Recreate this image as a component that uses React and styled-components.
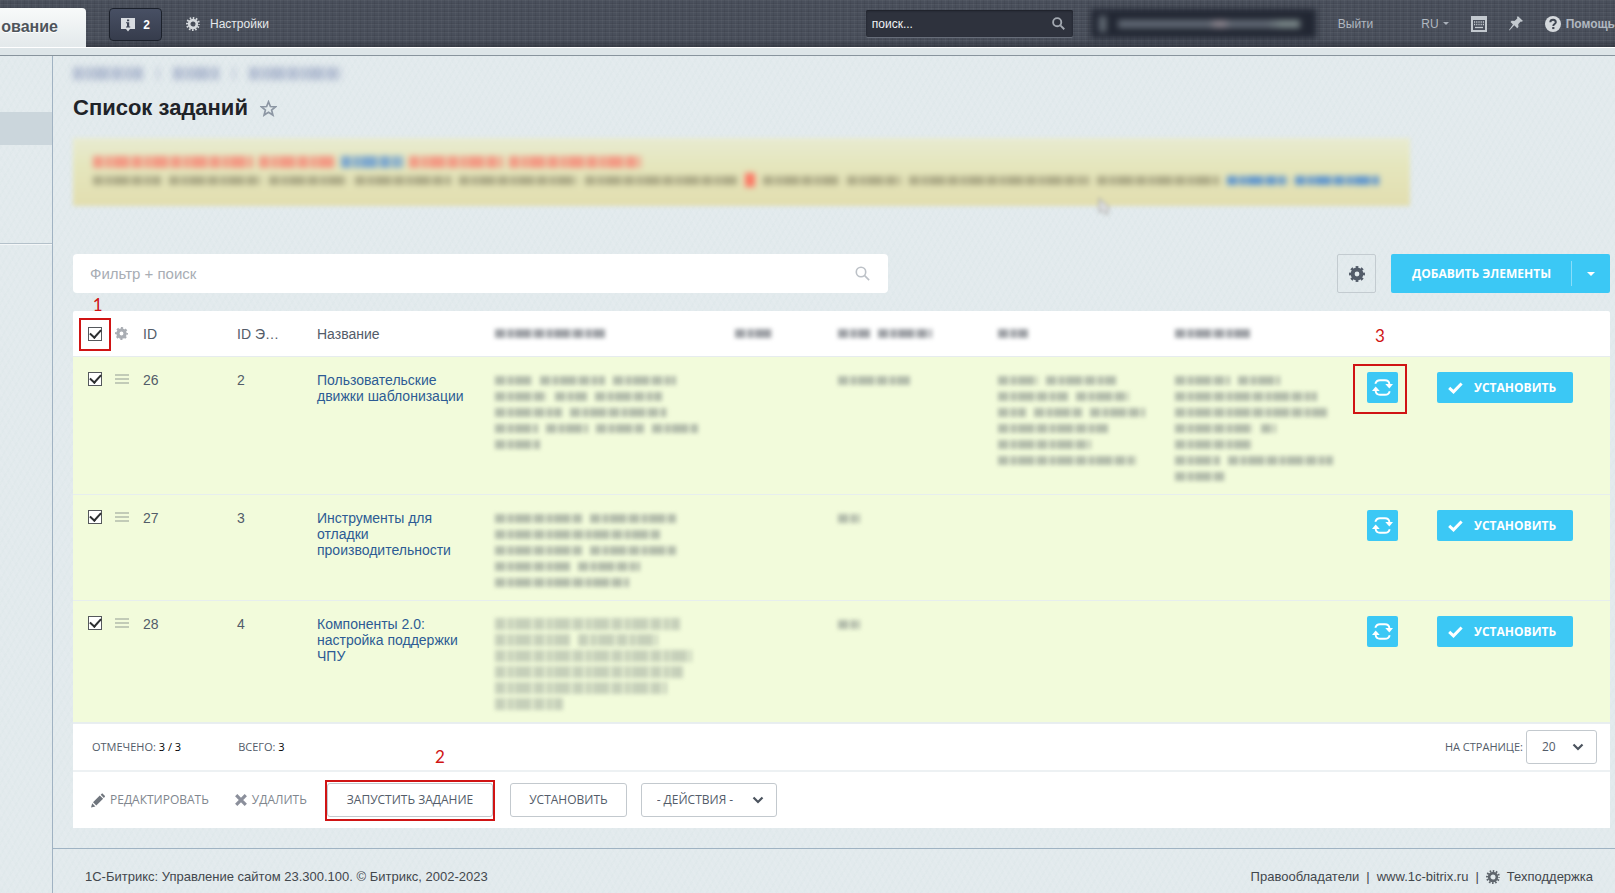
import React, { useState } from 'react'
import styled, { createGlobalStyle } from 'styled-components'

const GlobalStyle = createGlobalStyle`
  * { box-sizing: border-box; }
  body {
    margin: 0;
    background-color: #e2eaed;
    font-family: "Liberation Sans", Arial, sans-serif;
    font-size: 14px;
    color: #535c69;
  }
  button, input, select { font-family: inherit; margin: 0; }
`

const uiFont = '"Open Sans", "Noto Sans", sans-serif'

const Page = styled.div`
  display: flex;
  flex-direction: column;
  min-height: 100vh;
`

/* header */

const Header = styled.header`
  display: flex;
  align-items: flex-start;
  height: 47px;
  overflow: hidden;
  white-space: nowrap;
  font-size: 12px;
  background-color: #494f5b;
  background-image:
    linear-gradient(to bottom, transparent 40px, rgba(30, 34, 42, 0.45) 47px),
    repeating-linear-gradient(to right, rgba(255, 255, 255, 0.03) 0 1px, transparent 1px 3px, rgba(0, 0, 0, 0.06) 3px 4px, transparent 4px 7px),
    repeating-linear-gradient(to bottom, rgba(255, 255, 255, 0.04) 0 1px, transparent 1px 3px, rgba(0, 0, 0, 0.06) 3px 4px);
`

const Tab = styled.a`
  display: flex;
  justify-content: flex-end;
  width: 86px;
  height: 39px;
  margin-top: 8px;
  padding-right: 28px;
  border-radius: 0 4px 0 0;
  background: linear-gradient(to bottom, #f8fafa, #e3e9eb);
  color: #4e545b;
  font-size: 16px;
  font-weight: bold;
  line-height: 38px;
  text-decoration: none;
  text-shadow: 0 1px 0 #fff;
`

const InfoButton = styled.button`
  display: flex;
  align-items: center;
  justify-content: center;
  gap: 8px;
  width: 53px;
  height: 33px;
  margin: 8px 0 0 23px;
  padding: 0;
  border: 1px solid #1c212b;
  border-radius: 4px;
  background: linear-gradient(to bottom, #485064, #363c4c);
  color: #fff;
  font-size: 12px;
  font-weight: bold;
`

const HeaderLink = styled.a`
  display: flex;
  align-items: center;
  gap: ${props => props.$gap || 4}px;
  height: 47px;
  margin-left: ${props => props.$left || 0}px;
  color: ${props => props.$light ? '#e6e9ec' : '#b1b8c0'};
  font-weight: ${props => props.$bold ? 'bold' : 'normal'};
  text-decoration: none;
`

const Search = styled.label`
  display: flex;
  align-items: center;
  width: 207px;
  height: 27px;
  margin: 10px 0 0 auto;
  padding: 0 8px 0 6px;
  border-radius: 2px;
  background-color: #2e323d;
  box-shadow: inset 0 1px 2px #1c1f27, 0 1px 0 #676d79;
`

const SearchInput = styled.input`
  flex: 1;
  min-width: 0;
  padding: 0;
  border: 0;
  outline: 0;
  background: none;
  color: #fff;
  font-size: 12px;
  &::placeholder { color: #f1f2f4; opacity: 1; }
`

const UserBox = styled.div`
  display: flex;
  align-items: center;
  gap: 12px;
  width: 225px;
  height: 29px;
  margin: 9px 0 0 18px;
  padding-left: 8px;
  background-color: #222733;
  filter: blur(3px);
`

const UserBar = styled.span`
  width: ${props => props.$width}px;
  height: ${props => props.$height}px;
  background: linear-gradient(to right, #626a75 0 50%, #8b858e 54% 58%, #626a75 62% 82%, #7d8a8b 90%);
`

const Strip = styled.div`
  height: 9px;
  border-top: 1px solid #fff;
  border-bottom: 1px solid #88949d;
  background-color: #dde5e8;
`

/* page body */

const Body = styled.div`
  display: flex;
  flex: 1;
  background-image:
    repeating-linear-gradient(60deg, rgba(255, 255, 255, 0.07) 0 2px, transparent 2px 5px),
    repeating-linear-gradient(-60deg, rgba(170, 195, 190, 0.04) 0 2px, transparent 2px 6px);
`

const Sidebar = styled.nav`
  flex: none;
  width: 53px;
  padding-top: 56px;
  border-right: 1px solid #a0b2c2;
`

const SidebarItem = styled.div`
  height: 33px;
  background-color: #cbd6dc;
`

const SidebarLine = styled.div`
  height: 2px;
  margin-top: 98px;
  border-top: 1px solid #b4c1ca;
  border-bottom: 1px solid #f4f7f8;
`

const Column = styled.div`
  display: flex;
  flex: 1;
  flex-direction: column;
  min-width: 0;
`

const Main = styled.main`
  flex: 1;
  padding: 0 5px 20px 20px;
`

const Breadcrumbs = styled.div`
  display: flex;
  align-items: center;
  gap: 14px;
  height: 34px;
  filter: blur(3px);
`

const TitleRow = styled.div`
  display: flex;
  align-items: center;
  gap: 12px;
  height: 36px;
`

const Title = styled.h1`
  margin: 0;
  color: #1f2328;
  font-size: 22px;
  line-height: 36px;
`

const IconButton = styled.button`
  display: flex;
  padding: 0;
  border: 0;
  background: none;
`

const Banner = styled.section`
  position: relative;
  width: 87%;
  height: 68px;
  margin: 12px 0 48px;
  padding: 14px 20px;
  background: linear-gradient(to bottom, #e8ebd1, #e5e6bd 40%, #e2deb0);
  filter: blur(2px);
`

const Pointer = styled.svg`
  position: absolute;
  right: 296px;
  bottom: -11px;
`

/* text hidden behind a blur */

const RedactedLine = styled.div`
  display: flex;
  align-items: center;
  gap: ${props => props.$gap || 8}px;
  height: ${props => props.$tall ? 20 : 16}px;
  filter: blur(2px);
`

const RedactedWord = styled.span`
  flex: none;
  height: ${props => props.$height || 9}px;
  opacity: ${props => props.$opacity || 0.65};
  background-color: ${props => props.$color || '#77807f'};
  mask-image: repeating-linear-gradient(to right, #000 0 10px, rgba(0, 0, 0, 0.3) 10px 13px, #000 13px 18px, rgba(0, 0, 0, 0.4) 18px 20px, #000 20px 36px, rgba(0, 0, 0, 0.3) 36px 39px);
`

const Redacted = ({ lines, color, height, opacity }) => (
  <div aria-hidden="true">
    {lines.map((words, i) => (
      <RedactedLine key={i}>
        {words.map((width, j) => (
          <RedactedWord key={j} $color={color} $height={height} $opacity={opacity} style={{ width }} />
        ))}
      </RedactedLine>
    ))}
  </div>
)

/* toolbar */

const Toolbar = styled.div`
  display: flex;
  align-items: stretch;
  height: 39px;
  margin-bottom: 18px;
`

const Filter = styled.label`
  display: flex;
  align-items: center;
  width: 53%;
  margin-right: auto;
  padding: 0 18px 0 17px;
  border-radius: 4px;
  background-color: #fff;
`

const FilterInput = styled.input`
  flex: 1;
  padding: 0;
  border: 0;
  outline: 0;
  background: none;
  color: #333;
  font-size: 15px;
  &::placeholder { color: #a8adb4; opacity: 1; }
`

const SettingsButton = styled.button`
  display: flex;
  align-items: center;
  justify-content: center;
  width: 39px;
  margin-right: 15px;
  padding: 0;
  border: 1px solid #c3cbd0;
  border-radius: 2px;
  background: none;
`

const AddGroup = styled.div`
  display: flex;
  align-items: center;
  border-radius: 2px;
  background-color: #3bc8f5;
`

const AddButton = styled.button`
  height: 39px;
  padding: 0 20px 0 21px;
  border: 0;
  background: none;
  color: #fff;
  font: bold 12px/39px ${uiFont};
  text-transform: uppercase;
`

const AddMenuButton = styled.button`
  display: flex;
  align-items: center;
  justify-content: center;
  width: 39px;
  height: 25px;
  padding: 0;
  border: 0;
  border-left: 1px solid #89ddf9;
  background: none;
`

/* grid */

const Grid = styled.section`
  border-radius: 2px 2px 0 0;
  background-color: #fff;
`

const Table = styled.table`
  width: 100%;
  table-layout: fixed;
  border-collapse: separate;
  border-spacing: 0;
`

const Col = styled.col`
  width: ${props => props.$width ? `${props.$width}px` : 'auto'};
`

const Th = styled.th`
  height: 46px;
  padding: 0;
  border-bottom: 1px solid #e6ecee;
  font-weight: normal;
  line-height: 16px;
  text-align: left;
  white-space: nowrap;
`

const Td = styled.td`
  padding: 15px 20px 10px 0;
  border-bottom: 1px solid #e7eeee;
  background-color: #f2fbdb;
  line-height: 16px;
  vertical-align: top;
`

const Tools = styled.div`
  display: flex;
  align-items: center;
  gap: 13px;
  padding-left: 15px;
  > * { flex: none; }
`

const Checkbox = styled.input.attrs({ type: 'checkbox' })`
  appearance: none;
  display: flex;
  align-items: center;
  justify-content: center;
  width: 14px;
  height: 14px;
  border: 1px solid #55585c;
  background-color: #fff;
  &:checked::after {
    content: "";
    width: 5px;
    height: 9px;
    margin-top: -3px;
    border: solid #2d2f31;
    border-width: 0 2px 2px 0;
    transform: rotate(42deg);
  }
`

const NameLink = styled.a`
  color: #2d5b94;
  text-decoration: none;
`

const RefreshButton = styled.button`
  display: flex;
  align-items: center;
  justify-content: center;
  width: 31px;
  height: 31px;
  padding: 0;
  border: 0;
  border-radius: 2px;
  background-color: #3bc8f5;
`

const InstallButton = styled.button`
  display: flex;
  align-items: center;
  gap: 11px;
  width: 136px;
  height: 31px;
  padding: 0 0 0 11px;
  border: 0;
  border-radius: 2px;
  background-color: #3bc8f5;
  color: #fff;
  font: bold 12px/31px ${uiFont};
  text-transform: uppercase;
`

const Summary = styled.div`
  display: flex;
  align-items: center;
  gap: 57px;
  height: 47px;
  padding: 0 13px 0 19px;
  border-top: 1px solid #e9eef1;
  color: #535c69;
  font: 11px/16px ${uiFont};
  text-transform: uppercase;
`

const Count = styled.span`
  color: #000;
`

const PageSize = styled.label`
  display: flex;
  align-items: center;
  gap: 3px;
  margin-left: auto;
`

const Actions = styled.div`
  display: flex;
  align-items: center;
  height: 58px;
  padding: 0 18px;
  border-top: 2px solid #edf1f3;
`

const TextButton = styled.button`
  display: flex;
  align-items: center;
  gap: 5px;
  margin-right: ${props => props.$right}px;
  padding: 0;
  border: 0;
  background: none;
  color: #80868e;
  font: 12px/16px ${uiFont};
  text-transform: uppercase;
`

const OutlineButton = styled.button`
  height: 34px;
  padding: 0 ${props => props.$pad || 18}px;
  border: 1px solid #c3c9ce;
  border-radius: 3px;
  background-color: #fff;
  color: #535c69;
  font: 12px/32px ${uiFont};
  text-transform: uppercase;
`

const SelectBox = styled.span`
  display: grid;
  align-items: center;
  width: ${props => props.$width}px;
  margin-left: ${props => props.$left || 0}px;
  > * { grid-area: 1 / 1; }
  > svg { justify-self: end; margin-right: 13px; pointer-events: none; }
`

const Select = styled.select`
  appearance: none;
  width: 100%;
  height: 34px;
  padding: 0 30px 0 15px;
  border: 1px solid #c3c9ce;
  border-radius: 3px;
  background-color: #fff;
  color: #535c69;
  font: 12px/32px ${uiFont};
  text-transform: uppercase;
`

/* red callouts over the controls */

const Callout = styled.div`
  position: relative;
  display: inline-flex;
  margin-right: ${props => props.$right || 0}px;
`

const Frame = styled.span`
  position: absolute;
  inset: ${props => props.$inset};
  border: 2px solid #d01414;
  pointer-events: none;
`

const FrameNumber = styled.span`
  position: absolute;
  bottom: calc(100% + ${props => props.$gap}px);
  left: ${props => props.$left || '50%'};
  transform: translateX(-50%);
  color: #d01414;
  font: 17px/20px Lato, sans-serif;
`

/* footer */

const Footer = styled.footer`
  display: flex;
  align-items: center;
  padding: 20px 22px 8px 32px;
  border-top: 1px solid #9fb3c3;
  color: #42474c;
  font-size: 13px;
  line-height: 16px;
`

const FooterLinks = styled.div`
  display: flex;
  align-items: center;
  gap: 7px;
  margin-left: auto;
`

const FooterLink = styled.a`
  display: flex;
  align-items: center;
  gap: 7px;
  color: inherit;
  text-decoration: none;
`

/* icons */

const Gear = ({ size, color, teeth = 8, ring = 4 }) => (
  <svg width={size} height={size} viewBox="0 0 16 16" fill="none" stroke={color}>
    <circle cx="8" cy="8" r="4.4" strokeWidth={ring} />
    <circle cx="8" cy="8" r="6.8" strokeWidth="2.4" pathLength={teeth * 2} strokeDasharray="1 1" strokeDashoffset="0.5" />
  </svg>
)

const Magnifier = ({ size, color, width }) => (
  <svg width={size} height={size} viewBox="0 0 14 14" fill="none" stroke={color} strokeWidth={width}>
    <circle cx="5.6" cy="5.6" r="4.4" />
    <path d="M9 9l4.2 4.2" />
  </svg>
)

const Chevron = () => (
  <svg width="12" height="8" viewBox="0 0 12 8" fill="none" stroke="#4b535e" strokeWidth="2.2">
    <path d="M1.5 1.5L6 6l4.5-4.5" />
  </svg>
)

const Refresh = () => (
  <svg width="21" height="17" viewBox="0 0 21 17" fill="none" stroke="#fff" strokeWidth="1.9">
    <path d="M3.3 4.8C4 2.3 5.5 1.2 8 1.2h5c2.8 0 4.2 1.4 4.4 4" />
    <path d="M13.3 5H21l-3.7 4.5z" fill="#fff" stroke="none" />
    <path d="M17.7 12.2c-.7 2.5-2.2 3.6-4.7 3.6H8c-2.8 0-4.2-1.4-4.4-4" />
    <path d="M7.7 12H0l3.7-4.5z" fill="#fff" stroke="none" />
  </svg>
)

const Check = () => (
  <svg width="15" height="12" viewBox="0 0 15 12" fill="none" stroke="#fff" strokeWidth="3">
    <path d="M1.2 5.8l4.3 4L13.6 1.5" />
  </svg>
)

const Lines = () => (
  <svg width="14" height="10" viewBox="0 0 14 10" fill="#c2cbb7">
    <path d="M0 0h14v2H0zM0 4h14v2H0zM0 8h14v2H0z" />
  </svg>
)

const Info = () => (
  <svg width="14" height="15" viewBox="0 0 14 15">
    <path d="M0 1h14v11H9l-2 2.5L5 12H0z" fill="#d8dce1" />
    <path d="M6 2.5h2.2v1.8H6zM5 5.3h3.2v4.2h1v1H5v-1h1V6.3H5z" fill="#3d4455" />
  </svg>
)

const Keyboard = () => (
  <svg width="16" height="16" viewBox="0 0 16 16">
    <path d="M0 0h16v16H0z" fill="#c3c9cf" />
    <path d="M2 4h12v10H2z" fill="#4a505c" />
    <path d="M3 6h10M3 8.5h10" stroke="#c3c9cf" strokeWidth="1.3" strokeDasharray="1.2 1" />
    <path d="M4 11.5h8" stroke="#c3c9cf" strokeWidth="1.3" />
  </svg>
)

const Pin = () => (
  <svg width="14" height="15" viewBox="0 0 14 15" fill="#c3c9cf">
    <path d="M8.8 0L14 5l-1.500.8-.8-.3-2.5 2.8.3 2.7-1.3 1.2-2.9-2.9L.5 14.5 0 14l4-5.5L1.5 6l1.2-1.2 2.8.2 2.8-2.500-.3-1z" />
  </svg>
)

const Help = () => (
  <svg width="16" height="16" viewBox="0 0 16 16">
    <circle cx="8" cy="8" r="8" fill="#d5d9dd" />
    <path d="M5.3 6.2c.1-3.4 5.5-3.3 5.5 0 0 1.8-2.5 1.9-2.5 3.7" fill="none" stroke="#414753" strokeWidth="2" />
    <path d="M7.2 11h2.2v2.1H7.2z" fill="#414753" />
  </svg>
)

const Star = () => (
  <svg width="17" height="17" viewBox="0 0 17 17" fill="none" stroke="#8d97a4" strokeWidth="1.7">
    <path d="M8.500 1.800l1.900 4.700 5.100.3-3.900 3.200 1.300 5-4.400-2.800L4.100 15l1.300-5-3.900-3.200 5.100-.3z" />
  </svg>
)

const Pencil = () => (
  <svg width="14" height="15" viewBox="0 0 14 15" fill="#6f757d">
    <path d="M0 14.5l1.2-4.3 3.2 3.2zM2 9.2L8.800 2.500l3.300 3.300-6.800 6.700zM9.700 1.700L11.200.3l3 3L12.900 4.900z" />
  </svg>
)

const Cross = () => (
  <svg width="12" height="12" viewBox="0 0 12 12" stroke="#8b8f9b" strokeWidth="3.2">
    <path d="M1.2 1.2l9.6 9.6M10.8 1.2l-9.6 9.6" />
  </svg>
)

const Caret = ({ color, width }) => (
  <svg width={width} height={width / 2} viewBox="0 0 8 4" fill={color}>
    <path d="M0 0h8L4 4z" />
  </svg>
)

const columns = [70, 94, 80, 178, 240, 103, 160, 177, 192, 70, 0]

const hiddenHeads = [[[110]], [[37]], [[32, 54]], [[30]], [[75]]]

const rows = [
  {
    id: 26,
    itemId: 2,
    name: 'Пользовательские движки шаблонизации',
    about: [[37, 65, 63], [52, 32, 67], [67, 97], [43, 42, 48, 46], [45]],
    type: [[72]],
    plus: [[40, 70], [70, 53], [28, 48, 55], [110], [93], [138]],
    minus: [[55, 42], [142], [152], [78, 15], [77], [45, 105], [50]]
  },
  {
    id: 27,
    itemId: 3,
    name: 'Инструменты для отладки производительности',
    about: [[87, 86], [165], [87, 86], [75, 62], [134]],
    type: [[22]],
    plus: [],
    minus: []
  },
  {
    id: 28,
    itemId: 4,
    name: 'Компоненты 2.0: настройка поддержки ЧПУ',
    about: [[185], [75, 80], [197], [188], [172], [68]],
    type: [[22]],
    plus: [],
    minus: [],
    faded: true
  }
]

const TopBar = () => (
  <>
    <Header>
      <Tab href="#">ование</Tab>
      <InfoButton><Info />2</InfoButton>
      <HeaderLink href="#" $left={24} $gap={10} $light>
        <Gear size={14} color="#d5d9dd" teeth={12} ring={3} />
        Настройки
      </HeaderLink>
      <Search>
        <SearchInput placeholder="поиск..." aria-label="поиск" />
        <Magnifier size={13} color="#a3a9b1" width={2} />
      </Search>
      <UserBox aria-hidden="true">
        <UserBar $width={7} $height={16} />
        <UserBar $width={182} $height={8} />
      </UserBox>
      <HeaderLink href="#" $left={22}>Выйти</HeaderLink>
      <HeaderLink href="#" $left={48}>RU <Caret color="#a9b0b9" width={6} /></HeaderLink>
      <HeaderLink href="#" $left={22} aria-label="Клавиатура"><Keyboard /></HeaderLink>
      <HeaderLink href="#" $left={22} aria-label="Закрепить"><Pin /></HeaderLink>
      <HeaderLink href="#" $left={22} $gap={5} $bold><Help />Помощь</HeaderLink>
    </Header>
    <Strip />
  </>
)

const Notice = () => (
  <Banner aria-hidden="true">
    <RedactedLine $tall $gap={6}>
      <RedactedWord $color="#f77f70" $height={12} $opacity={0.75} style={{ width: 160 }} />
      <RedactedWord $color="#f77f70" $height={12} $opacity={0.75} style={{ width: 76 }} />
      <RedactedWord $color="#6f9fd0" $height={12} $opacity={0.9} style={{ width: 62 }} />
      <RedactedWord $color="#f77f70" $height={12} $opacity={0.75} style={{ width: 94 }} />
      <RedactedWord $color="#f77f70" $height={12} $opacity={0.75} style={{ width: 132 }} />
    </RedactedLine>
    <RedactedLine>
      {[68, 92, 78, 96, 118, 152].map((width, i) => (
        <RedactedWord key={i} $color="#8e8a6c" style={{ width }} />
      ))}
      <RedactedWord $color="#ff6b5a" $height={14} $opacity={0.9} style={{ width: 10 }} />
      {[76, 54, 180, 122].map((width, i) => (
        <RedactedWord key={i} $color="#8e8a6c" style={{ width }} />
      ))}
      <RedactedWord $color="#4f8cd0" $opacity={0.9} style={{ width: 60 }} />
      <RedactedWord $color="#4f8cd0" $opacity={0.9} style={{ width: 84 }} />
    </RedactedLine>
    <Pointer width="18" height="20" viewBox="0 0 18 20">
      <path d="M3 1l10 9-2 8-4-4-4 1z" fill="#dcdde0" stroke="#9a9a92" />
    </Pointer>
  </Banner>
)

const App = () => {
  const [checked, setChecked] = useState([26, 27, 28])
  const [pageSize, setPageSize] = useState('20')

  const toggle = id => setChecked(
    checked.includes(id) ? checked.filter(item => item !== id) : [...checked, id]
  )
  const toggleAll = () => setChecked(checked.length === rows.length ? [] : rows.map(row => row.id))

  return (
    <Page>
      <GlobalStyle />
      <TopBar />
      <Body>
        <Sidebar>
          <SidebarItem />
          <SidebarLine />
        </Sidebar>
        <Column>
          <Main>
            <Breadcrumbs aria-hidden="true">
              {[70, 2, 46, 2, 92].map((width, i) => (
                <RedactedWord key={i} $color="#97a3c2" $height={13} $opacity={0.6} style={{ width }} />
              ))}
            </Breadcrumbs>
            <TitleRow>
              <Title>Список заданий</Title>
              <IconButton aria-label="В избранное"><Star /></IconButton>
            </TitleRow>
            <Notice />
            <Toolbar>
              <Filter>
                <FilterInput placeholder="Фильтр + поиск" aria-label="Фильтр + поиск" />
                <Magnifier size={15} color="#bcc1c7" width={1.5} />
              </Filter>
              <SettingsButton aria-label="Настройки списка">
                <Gear size={16} color="#535c69" />
              </SettingsButton>
              <AddGroup>
                <AddButton>Добавить элементы</AddButton>
                <AddMenuButton aria-label="Ещё"><Caret color="#fff" width={8} /></AddMenuButton>
              </AddGroup>
            </Toolbar>
            <Grid>
              <Table>
                <colgroup>
                  {columns.map((width, i) => <Col key={i} $width={width} />)}
                </colgroup>
                <thead>
                  <tr>
                    <Th>
                      <Tools>
                        <Callout>
                          <Checkbox
                            aria-label="Выбрать все"
                            checked={checked.length === rows.length}
                            onChange={toggleAll}
                          />
                          <Frame $inset="-9px -9px -10px"><FrameNumber $gap={5} $left="60%">1</FrameNumber></Frame>
                        </Callout>
                        <Gear size={13} color="#a9adb3" />
                      </Tools>
                    </Th>
                    <Th>ID</Th>
                    <Th>ID Э…</Th>
                    <Th>Название</Th>
                    {hiddenHeads.map((lines, i) => (
                      <Th key={i}><Redacted lines={lines} color="#6c7078" /></Th>
                    ))}
                    <Th />
                    <Th />
                  </tr>
                </thead>
                <tbody>
                  {rows.map((row, i) => (
                    <tr key={row.id}>
                      <Td>
                        <Tools>
                          <Checkbox
                            aria-label={row.name}
                            checked={checked.includes(row.id)}
                            onChange={() => toggle(row.id)}
                          />
                          <Lines />
                        </Tools>
                      </Td>
                      <Td>{row.id}</Td>
                      <Td>{row.itemId}</Td>
                      <Td><NameLink href="#">{row.name}</NameLink></Td>
                      <Td>
                        <Redacted lines={row.about} height={row.faded ? 12 : 9} opacity={row.faded ? 0.35 : 0.5} />
                      </Td>
                      <Td />
                      <Td><Redacted lines={row.type} opacity={0.5} /></Td>
                      <Td><Redacted lines={row.plus} opacity={0.5} /></Td>
                      <Td><Redacted lines={row.minus} opacity={0.5} /></Td>
                      <Td>
                        <Callout>
                          <RefreshButton aria-label="Обновить"><Refresh /></RefreshButton>
                          {i === 0 &&
                            <Frame $inset="-8px -9px -11px -14px"><FrameNumber $gap={20}>3</FrameNumber></Frame>
                          }
                        </Callout>
                      </Td>
                      <Td><InstallButton><Check />Установить</InstallButton></Td>
                    </tr>
                  ))}
                </tbody>
              </Table>
              <Summary>
                <span>Отмечено: <Count>{checked.length} / {rows.length}</Count></span>
                <span>Всего: <Count>{rows.length}</Count></span>
                <PageSize>
                  На странице:
                  <SelectBox $width={71}>
                    <Select value={pageSize} onChange={e => setPageSize(e.target.value)}>
                      <option>20</option>
                      <option>50</option>
                      <option>100</option>
                    </Select>
                    <Chevron />
                  </SelectBox>
                </PageSize>
              </Summary>
              <Actions>
                <TextButton $right={26}><Pencil />Редактировать</TextButton>
                <TextButton $right={20}><Cross />Удалить</TextButton>
                <Callout $right={17}>
                  <OutlineButton $pad={19}>Запустить задание</OutlineButton>
                  <Frame $inset="-3px -2px -4px"><FrameNumber $gap={15} $left="68%">2</FrameNumber></Frame>
                </Callout>
                <OutlineButton>Установить</OutlineButton>
                <SelectBox $width={136} $left={14}>
                  <Select aria-label="Действия">
                    <option>- действия -</option>
                  </Select>
                  <Chevron />
                </SelectBox>
              </Actions>
            </Grid>
          </Main>
          <Footer>
            <span>1С-Битрикс: Управление сайтом 23.300.100. © Битрикс, 2002-2023</span>
            <FooterLinks>
              <FooterLink href="#">Правообладатели</FooterLink>
              <span>|</span>
              <FooterLink href="#">www.1c-bitrix.ru</FooterLink>
              <span>|</span>
              <FooterLink href="#">
                <Gear size={14} color="#5e656c" teeth={12} ring={3} />
                Техподдержка
              </FooterLink>
            </FooterLinks>
          </Footer>
        </Column>
      </Body>
    </Page>
  )
}

export default App
